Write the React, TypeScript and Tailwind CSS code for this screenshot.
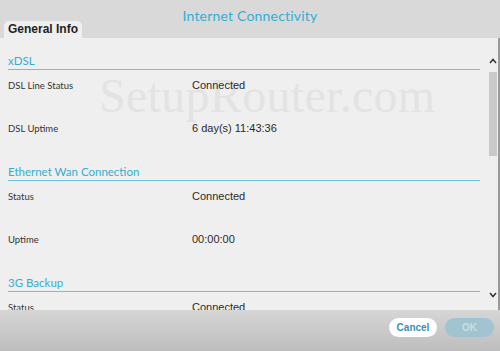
import React from "react";

const sections = [
  {
    title: "xDSL",
    rows: [
      { label: "DSL Line Status", value: "Connected" },
      { label: "DSL Uptime", value: "6 day(s) 11:43:36" },
    ],
  },
  {
    title: "Ethernet Wan Connection",
    rows: [
      { label: "Status", value: "Connected" },
      { label: "Uptime", value: "00:00:00" },
    ],
  },
  {
    title: "3G Backup",
    rows: [
      { label: "Status", value: "Connected" },
      { label: "Uptime", value: "00:00:00" },
    ],
  },
];

export default function App() {
  return (
    <div className="w-[500px] h-[351px] flex flex-col bg-[#d9d9d9] overflow-hidden font-['Liberation_Sans',sans-serif]">
      {/* header */}
      <div className="h-[38px] relative shrink-0">
        <div className="text-center pt-[5px] text-[14px] text-[#35aed2] font-['Lato',sans-serif] tracking-[0.2px]">
          Internet Connectivity
        </div>
        <div className="absolute left-[4px] bottom-0 h-[17px] px-[4px] bg-[#efefef] rounded-t-[5px] text-[12px] font-bold text-[#1f1f1f] leading-[17px]">
          General Info
        </div>
      </div>

      {/* body */}
      <div className="h-[272px] shrink-0 bg-[#efefef] relative flex overflow-hidden border-r-2 border-[#9a9a9a]">
        <div className="flex-1 pl-[8px] pr-[18px] pt-[15px] relative">
          <div className="absolute left-[99px] top-[34px] text-[48px] leading-none text-[#e3e3e3] font-['Liberation_Serif',serif] tracking-[0.3px] select-none">
            SetupRouter.com
          </div>
          {sections.map((s) => (
            <div key={s.title} className="relative mb-[8px]">
              <div className="text-[11.5px] leading-[15px] text-[#36acd3] font-['Lato',sans-serif] border-b border-[#6cc3dc] pb-[1px]">
                {s.title}
              </div>
              {s.rows.map((r) => (
                <div key={r.label} className="flex h-[43px] pt-[9px]">
                  <div className="w-[184px] text-[9.5px] leading-[14px] text-[#333] font-['Lato',sans-serif]">{r.label}</div>
                  <div className="text-[11px] leading-[13px] text-[#2a2a2a]">{r.value}</div>
                </div>
              ))}
            </div>
          ))}
        </div>
        {/* scrollbar */}
        <div className="absolute right-0 top-0 bottom-0 w-[10px] flex flex-col items-center">
          <svg width="8" height="6" viewBox="0 0 8 6" className="mt-[20px]">
            <path d="M1 5 L4 1.5 L7 5" fill="none" stroke="#333" strokeWidth="1.5" />
          </svg>
          <div className="w-[8px] h-[84px] bg-[#c9c9c9] mt-[8px]" />
          <div className="flex-1" />
          <svg width="8" height="6" viewBox="0 0 8 6" className="mb-[12px]">
            <path d="M1 1 L4 4.5 L7 1" fill="none" stroke="#333" strokeWidth="1.5" />
          </svg>
        </div>
      </div>

      {/* footer */}
      <div className="flex-1 bg-gradient-to-b from-[#d6d6d6] to-[#bdbdbd] flex items-start justify-end gap-[8px] pt-[8px] pr-[6px]">
        <button className="w-[48px] h-[19px] rounded-full bg-white text-[10px] font-bold text-[#3c8fb3]">Cancel</button>
        <button className="w-[49px] h-[19px] rounded-full bg-[#a2c3d0] text-[10px] font-bold text-[#c9dde5]">OK</button>
      </div>
    </div>
  );
}
